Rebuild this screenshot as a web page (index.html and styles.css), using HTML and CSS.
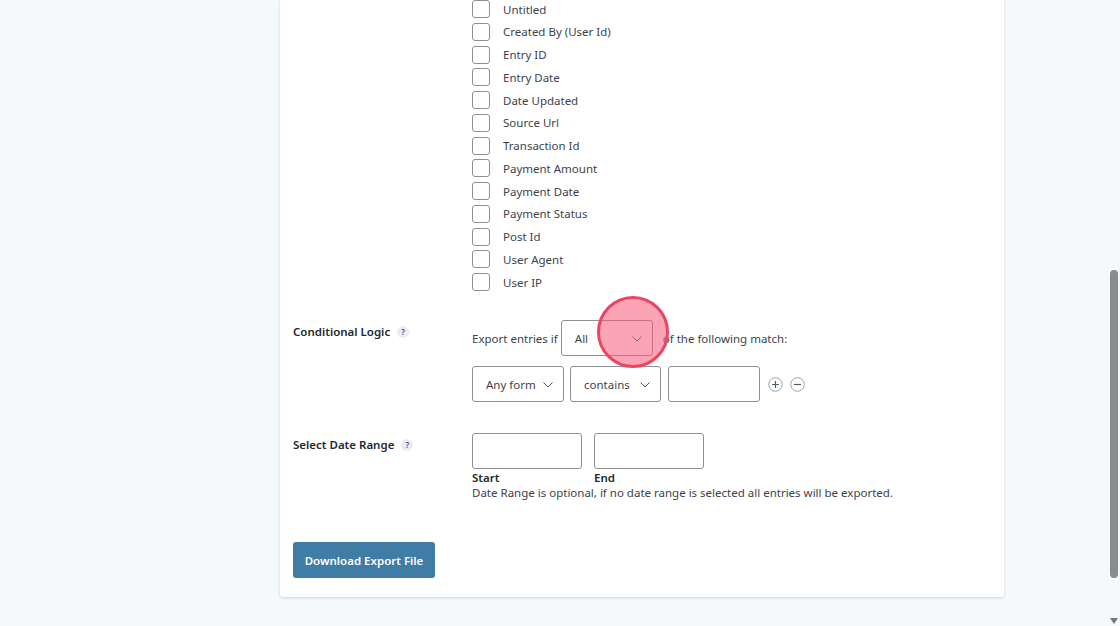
FILE: index.html
```html
<!DOCTYPE html>
<html lang="en">
<head>
    <meta charset="UTF-8">
    <meta name="viewport" content="width=device-width, initial-scale=1.0">
    <title>Export Entries</title>
    <link rel="stylesheet" href="styles.css">
</head>
<body>
    <div class="page">
        <div class="card">
            <div class="field-list">
                <label class="check"><span class="box"></span>Untitled</label>
                <label class="check"><span class="box"></span>Created By (User Id)</label>
                <label class="check"><span class="box"></span>Entry ID</label>
                <label class="check"><span class="box"></span>Entry Date</label>
                <label class="check"><span class="box"></span>Date Updated</label>
                <label class="check"><span class="box"></span>Source Url</label>
                <label class="check"><span class="box"></span>Transaction Id</label>
                <label class="check"><span class="box"></span>Payment Amount</label>
                <label class="check"><span class="box"></span>Payment Date</label>
                <label class="check"><span class="box"></span>Payment Status</label>
                <label class="check"><span class="box"></span>Post Id</label>
                <label class="check"><span class="box"></span>User Agent</label>
                <label class="check"><span class="box"></span>User IP</label>
            </div>

            <div class="row row-logic">
                <div class="row-label">Conditional Logic <span class="help">?</span></div>
                <div class="row-body">
                    <div class="logic-line">
                        <span>Export entries if</span>
                        <div class="select select-all">All
                            <svg class="chev" width="10" height="6" viewBox="0 0 10 6"><path d="M.5.5 5 5 9.500.5" fill="none" stroke="#50575e"/></svg>
                        </div>
                        <span class="of-text">of the following match:</span>
                    </div>
                    <div class="rule-line">
                        <div class="select select-form"><span class="clip">Any form field</span>
                            <svg class="chev" width="10" height="6" viewBox="0 0 10 6"><path d="M.5.5 5 5 9.500.5" fill="none" stroke="#50575e"/></svg>
                        </div>
                        <div class="select select-op">contains
                            <svg class="chev" width="10" height="6" viewBox="0 0 10 6"><path d="M.5.5 5 5 9.500.5" fill="none" stroke="#50575e"/></svg>
                        </div>
                        <div class="input input-rule"></div>
                        <svg class="round-btn add" width="15" height="15" viewBox="0 0 15 15"><circle cx="7.500" cy="7.500" r="6.800" fill="#fff" stroke="#9aa3ad"/><path d="M7.500 4v7M4 7.500h7" stroke="#4f5a66" stroke-width="1.200"/></svg>
                        <svg class="round-btn" width="15" height="15" viewBox="0 0 15 15"><circle cx="7.500" cy="7.500" r="6.800" fill="#fff" stroke="#9aa3ad"/><path d="M4 7.500h7" stroke="#4f5a66" stroke-width="1.200"/></svg>
                    </div>
                </div>
            </div>

            <div class="row row-date">
                <div class="row-label">Select Date Range <span class="help">?</span></div>
                <div class="row-body">
                    <div class="date-line">
                        <div class="date-col"><div class="input input-date"></div><strong>Start</strong></div>
                        <div class="date-col"><div class="input input-date"></div><strong>End</strong></div>
                    </div>
                    <div class="note">Date Range is optional, if no date range is selected all entries will be exported.</div>
                </div>
            </div>

            <button class="download">Download Export File</button>
        </div>

        <div class="scrollbar">
            <div class="thumb"></div>
            <div class="arrow"></div>
        </div>
    </div>

    <div class="click-ring"></div>
</body>
</html>
```

FILE: styles.css
```css
html, body
{
    margin: 0;
    height: 626px;
    overflow: hidden;
}
body
{
    font-family: "Noto Sans", "Open Sans", Arial, sans-serif;
    font-size: 11.5px;
    color: #3c434a;
    background-color: #f5f9fc;
}
.page
{
    display: flex;
    justify-content: space-between;
    height: 626px;
    padding-left: 280px;
    box-sizing: border-box;
}
.card
{
    width: 724px;
    height: 597px;
    box-sizing: border-box;
    padding: 0 13px;
    background: white;
    border-radius: 0 0 3px 3px;
    box-shadow: 0 1px 3px rgba(30, 50, 80, 0.18);
}
.field-list
{
    display: flex;
    flex-direction: column;
    gap: 4.75px;
    padding-left: 179px;
}
.check
{
    display: flex;
    align-items: center;
    height: 18px;
}
.box
{
    width: 18px;
    height: 18px;
    box-sizing: border-box;
    margin-right: 13px;
    background: white;
    border: 1px solid #8c8f94;
    border-radius: 3px;
}
.row
{
    display: flex;
}
.row-logic
{
    margin-top: 29px;
}
.row-date
{
    margin-top: 31px;
}
.row-label
{
    width: 179px;
    flex-shrink: 0;
    font-weight: 600;
    color: #23282d;
    padding-top: 4px;
}
.help
{
    display: inline-block;
    width: 12px;
    height: 12px;
    line-height: 12px;
    margin-left: 4px;
    text-align: center;
    font-size: 8px;
    color: #4a4a6a;
    background-color: #ebebf5;
    border-radius: 50%;
    vertical-align: 1px;
}
.logic-line, .rule-line
{
    display: flex;
    align-items: center;
}
.logic-line
{
    height: 36px;
}
.rule-line
{
    margin-top: 10px;
}
.select, .input
{
    display: flex;
    align-items: center;
    position: relative;
    height: 36px;
    box-sizing: border-box;
    background: white;
    border: 1px solid #8c8f94;
    border-radius: 3px;
}
.select
{
    padding-left: 13px;
}
.chev
{
    position: absolute;
    right: 10px;
    top: 15px;
}
.select-all
{
    width: 92px;
    margin-left: 3px;
}
.of-text
{
    margin-left: 10px;
}
.select-form
{
    width: 92px;
}
.clip
{
    width: 52px;
    overflow: hidden;
    white-space: nowrap;
}
.select-op
{
    width: 91px;
    margin-left: 6px;
}
.input-rule
{
    width: 92px;
    margin-left: 7px;
}
.round-btn
{
    margin-left: 7px;
}
.round-btn.add
{
    margin-left: 8px;
}
.date-line
{
    display: flex;
    gap: 12px;
}
.date-col strong
{
    display: block;
    margin-top: 1px;
    font-weight: 600;
    color: #23282d;
}
.input-date
{
    width: 110px;
    height: 36px;
}
.note
{
    line-height: 16px;
}
.download
{
    display: block;
    width: 142px;
    height: 36px;
    margin-top: 41px;
    padding: 0;
    font-family: inherit;
    font-size: 11.5px;
    font-weight: 600;
    color: white;
    background-color: #3f7ca6;
    border: none;
    border-radius: 3px;
}
.scrollbar
{
    display: flex;
    flex-direction: column;
    justify-content: space-between;
    width: 10px;
    padding-top: 270px;
    padding-bottom: 2px;
    box-sizing: border-box;
}
.thumb
{
    width: 8px;
    height: 308px;
    background-color: #8b8b8b;
    border-radius: 4px;
}
.arrow
{
    width: 0;
    height: 0;
    border-left: 4px solid transparent;
    border-right: 4px solid transparent;
    border-top: 6px solid #777;
}
.click-ring
{
    position: absolute;
    left: 597px;
    top: 296px;
    width: 72px;
    height: 72px;
    box-sizing: border-box;
    background-color: rgba(247, 90, 120, 0.55);
    border: 3px solid #ec4463;
    border-radius: 50%;
}
```
